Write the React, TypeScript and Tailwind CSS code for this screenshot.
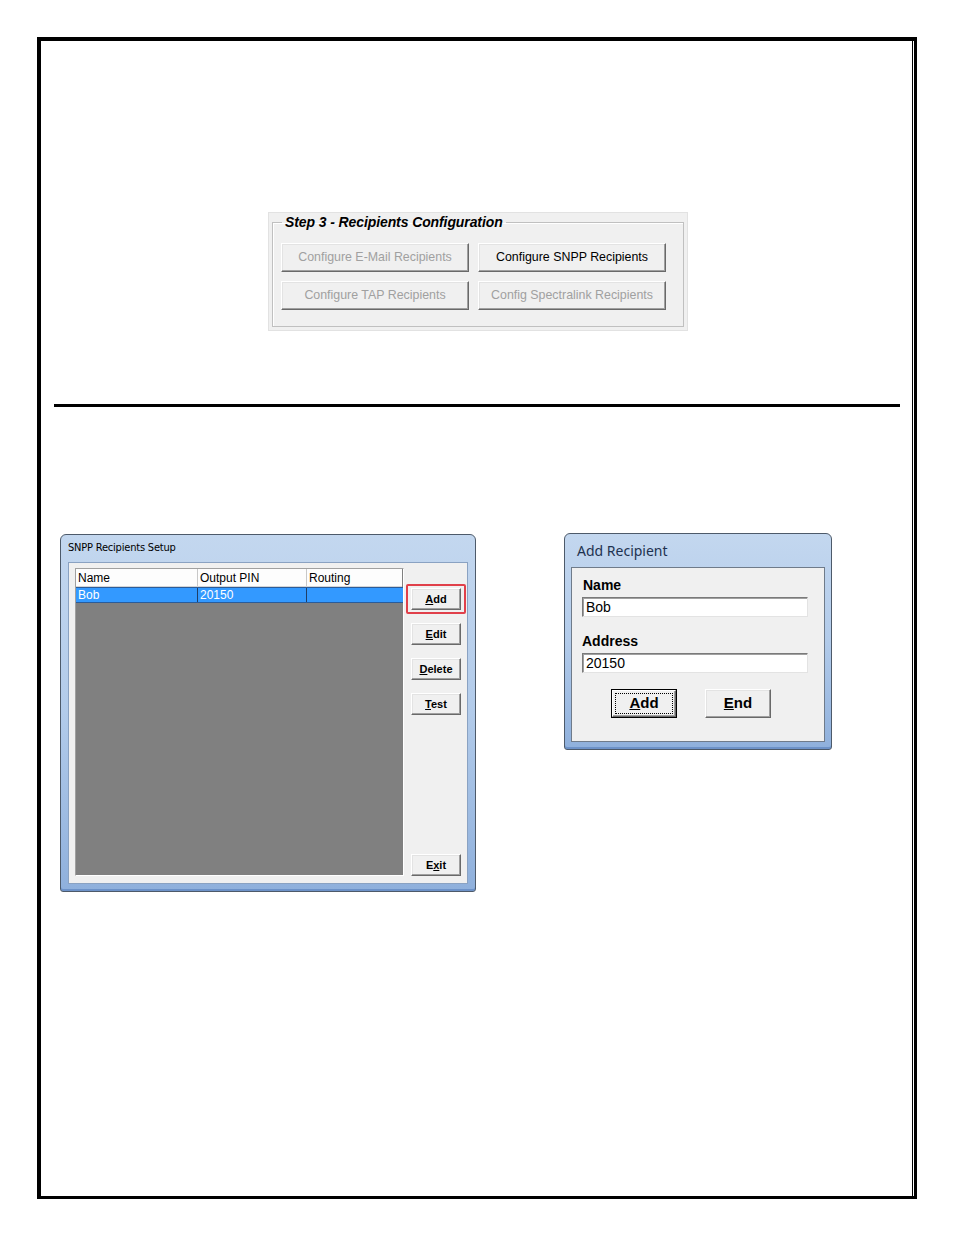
import React from "react";

function WinButton({
  children,
  className,
  textClass,
}: {
  children: React.ReactNode;
  className: string;
  textClass: string;
}) {
  return (
    <div
      className={`flex items-center justify-center bg-[#f0f0f0] border border-t-white border-l-white border-r-[#696969] border-b-[#696969] shadow-[inset_-1px_-1px_0_#a0a0a0,inset_1px_1px_0_#e3e3e3] ${className}`}
    >
      <span className={textClass}>{children}</span>
    </div>
  );
}

function RecipientsGroup() {
  const btn = "w-[188px] h-[29px]";
  return (
    <div className="ml-[227px] mt-[171px] w-[420px] h-[119px] bg-[#f0f0f0] border border-[#e2e2e2] px-[3px] pt-[1px] pb-[3px]">
      <fieldset className="border border-[#c0c0c0] shadow-[inset_1px_1px_0_#ffffff] h-full px-[8px] pb-[16px]">
        <legend className="ml-[1px] px-[3px] leading-[16px] text-[14px] font-bold italic text-black tracking-[-0.1px]">
          Step 3 - Recipients Configuration
        </legend>
        <div className="grid grid-cols-[188px_188px] gap-x-[9px] gap-y-[9px] mt-[13px]">
          <WinButton className={btn} textClass="text-[12.4px] text-[#a0a0a0]">
            Configure E-Mail Recipients
          </WinButton>
          <WinButton className={btn} textClass="text-[12.4px] text-black">
            Configure SNPP Recipients
          </WinButton>
          <WinButton className={btn} textClass="text-[12.4px] text-[#a0a0a0]">
            Configure TAP Recipients
          </WinButton>
          <WinButton className={btn} textClass="text-[12.4px] text-[#a0a0a0]">
            Config Spectralink Recipients
          </WinButton>
        </div>
      </fieldset>
    </div>
  );
}

function SnppWindow() {
  const side = "w-[50px] h-[22px]";
  const label = "text-[11px] font-bold text-black";
  return (
    <div className="mt-[1px] w-[416px] h-[358px] rounded-t-[6px] rounded-b-[3px] border border-[#4d5a6a] bg-gradient-to-b from-[#c3d7ef] via-[#b2cbea] to-[#8fb0dc] shadow-[inset_0_-2px_0_#6d92c8] flex flex-col px-[7px] pb-[7px]">
      <div className="h-[27px] flex items-center">
        <span className="text-[11px] text-black font-['DejaVu_Sans_Condensed',sans-serif] tracking-[-0.2px]">
          SNPP Recipients Setup
        </span>
      </div>
      <div className="flex-1 bg-[#f0f0f0] border border-[#8aa2c2] flex pt-[5px] pl-[6px]">
        <div className="w-[329px] h-[308px] border border-t-[#a0a0a0] border-l-[#a0a0a0] border-r-white border-b-white bg-[#808080] flex flex-col">
          <div className="h-[18px] bg-[#fdfdfd] flex text-[12px] text-black border-b border-[#d5d5d5] mr-[1px]">
            <div className="w-[122px] border-r border-[#c8c8c8] pl-[2px] leading-[18px]">Name</div>
            <div className="w-[109px] border-r border-[#c8c8c8] pl-[2px] leading-[18px]">Output PIN</div>
            <div className="flex-1 pl-[2px] leading-[18px]">Routing</div>
          </div>
          <div className="h-[16px] bg-[#3399ff] flex text-[12px] text-white border-y border-[#2a5c9a]">
            <div className="w-[122px] border-r border-[#1f3e66] pl-[2px] leading-[14px]">Bob</div>
            <div className="w-[109px] border-r border-[#1f3e66] pl-[2px] leading-[14px]">20150</div>
            <div className="flex-1" />
          </div>
        </div>
        <div className="ml-[7px] pt-[20px] flex flex-col">
          <div className="relative">
            <div className="absolute -left-[5px] -right-[5px] -top-[4px] -bottom-[4px] border-2 border-[#e0404a] rounded-[2px]" />
            <WinButton className={side} textClass={label}>
              <u>A</u>dd
            </WinButton>
          </div>
          <WinButton className={`${side} mt-[13px]`} textClass={label}>
            <u>E</u>dit
          </WinButton>
          <WinButton className={`${side} mt-[13px]`} textClass={label}>
            <u>D</u>elete
          </WinButton>
          <WinButton className={`${side} mt-[13px]`} textClass={label}>
            <u>T</u>est
          </WinButton>
          <WinButton className={`${side} mt-[139px]`} textClass={label}>
            E<u>x</u>it
          </WinButton>
        </div>
      </div>
    </div>
  );
}

function TextBox({ value }: { value: string }) {
  return (
    <div className="w-[226px] h-[20px] bg-white border border-t-[#7a7a7a] border-l-[#7a7a7a] border-r-[#e3e3e3] border-b-[#e3e3e3] shadow-[inset_1px_1px_0_#a0a0a0] pl-[3px] text-[14px] leading-[18px] text-black">
      {value}
    </div>
  );
}

function AddRecipientDialog() {
  return (
    <div className="w-[268px] h-[217px] rounded-t-[6px] rounded-b-[3px] border border-[#4d5a6a] bg-gradient-to-b from-[#c3d7ef] via-[#b2cbea] to-[#8fb0dc] shadow-[inset_0_-2px_0_#6d92c8] flex flex-col px-[6px] pb-[7px]">
      <div className="h-[33px] flex items-center pl-[6px]">
        <span className="text-[14px] text-[#1e3250] font-['Noto_Sans',sans-serif]">Add Recipient</span>
      </div>
      <div className="flex-1 bg-[#f0f0f0] border border-[#6f7b8a] pl-[10px] pt-[9px]">
        <div className="text-[14px] font-bold leading-[16px] pl-[1px] text-black">Name</div>
        <div className="mt-[4px]">
          <TextBox value="Bob" />
        </div>
        <div className="mt-[16px] text-[14px] font-bold leading-[16px] text-black">Address</div>
        <div className="mt-[4px]">
          <TextBox value="20150" />
        </div>
        <div className="mt-[16px] flex gap-[28px] pl-[29px]">
          <div className="w-[66px] h-[29px] border border-black">
            <div className="w-full h-full bg-[#f0f0f0] border border-t-white border-l-white border-r-[#696969] border-b-[#696969] shadow-[inset_-1px_-1px_0_#a0a0a0] p-[2px]">
              <div className="w-full h-full border border-dotted border-black flex items-center justify-center">
                <span className="text-[15px] font-bold text-black">
                  <u>A</u>dd
                </span>
              </div>
            </div>
          </div>
          <WinButton className="w-[66px] h-[29px]" textClass="text-[15px] font-bold text-black">
            <u>E</u>nd
          </WinButton>
        </div>
      </div>
    </div>
  );
}

export default function App() {
  return (
    <div className="w-[954px] h-[1235px] bg-white pt-[37px] pl-[37px] font-['Liberation_Sans',Arial,sans-serif]">
      <div className="w-[880px] h-[1162px] border-l-4 border-t-4 border-r-[3px] border-b-[3px] border-black">
        <div className="h-[1158px] mr-[1px] border-r border-b border-black flex flex-col">
          <RecipientsGroup />
          <div className="mt-[73px] ml-[13px] w-[846px] h-[3px] bg-black" />
          <div className="mt-[126px] ml-[19px] flex items-start gap-[88px]">
            <SnppWindow />
            <AddRecipientDialog />
          </div>
        </div>
      </div>
    </div>
  );
}
